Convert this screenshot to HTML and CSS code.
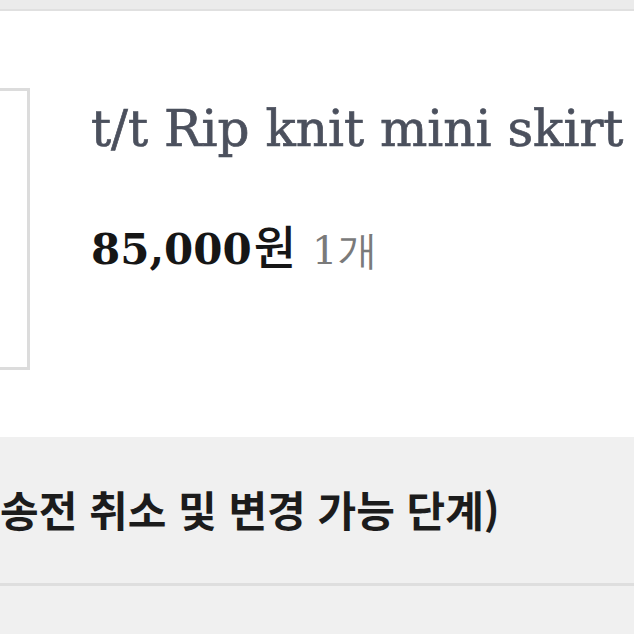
FILE: index.html
```
<!DOCTYPE html>
<html lang="ko">
<head>
    <meta charset="UTF-8">
    <meta name="viewport" content="width=device-width, initial-scale=1.0">
    <title>주문 상세</title>
    <link rel="stylesheet" href="styles.css">
</head>
<body>
    <div class="topbar"></div>

    <div class="order-item">
        <div class="thumb"></div>
        <div class="info">
            <div class="name">t/t Rip knit mini skirt</div>
            <div class="price-row">
                <span class="price">85,000<span class="won">원</span></span>
                <span class="qty">1개</span>
            </div>
        </div>
    </div>

    <div class="status">
        <div class="status-text">송전 취소 및 변경 가능 단계)</div>
    </div>
    <div class="status-bottom"></div>
</body>
</html>
```

FILE: styles.css
```
body {
    margin: 0;
    background: #fff;
    overflow: hidden;
    font-family: "DejaVu Serif", serif;
}
.topbar {
    height: 9px;
    background-color: #ebebeb;
    border-bottom: 2px solid #e0e0e0;
}
.order-item {
    display: flex;
    align-items: flex-start;
    padding-top: 77px;
    height: 349px;
}
.thumb {
    flex: none;
    width: 276px;
    height: 276px;
    margin-left: -252px;
    border: 3px solid #dcdcdc;
    background: #fff;
}
.info {
    margin-left: 61px;
    padding-top: 11px;
}
.name {
    font-size: 50px;
    line-height: 60px;
    color: #4b505d;
    white-space: nowrap;
    -webkit-text-stroke: 0.7px #4b505d;
}
.price-row {
    margin-top: 52px;
    display: flex;
    align-items: baseline;
    gap: 16px;
}
.price {
    font-size: 42px;
    font-weight: bold;
    color: #161616;
}
.won {
    font-family: "Noto Sans CJK KR", sans-serif;
    font-size: 46px;
    font-weight: 500;
    margin-left: 2px;
}
.qty {
    font-size: 40px;
    color: #7a7a7a;
}
.status {
    background-color: #f0f0f0;
    height: 146px;
    display: flex;
    align-items: center;
    border-bottom: 3px solid #dedede;
}
.status-text {
    font-family: "Noto Sans CJK KR", sans-serif;
    font-size: 42px;
    font-weight: bold;
    color: #1c1c1c;
    white-space: nowrap;
    margin-top: -4px;
}
.status-bottom {
    height: 60px;
    background-color: #f0f0f0;
}
```
